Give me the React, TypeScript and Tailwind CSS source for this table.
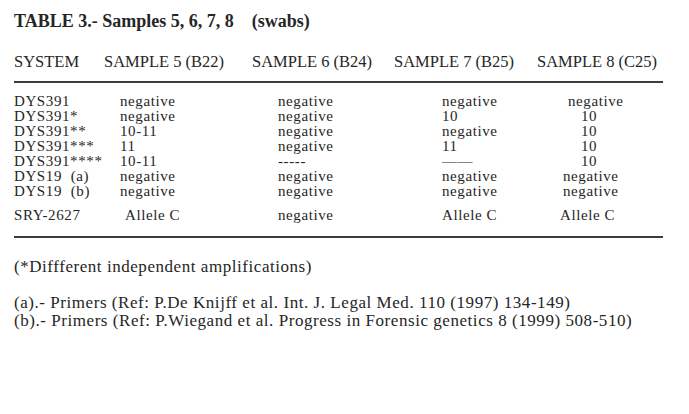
const rows = [
  { sys: "DYS391", s5: "negative", s6: "negative", s7: "negative", s8: "negative", p8: "pl-[8px]" },
  { sys: "DYS391*", s5: "negative", s6: "negative", s7: "10", s8: "10", p8: "pl-[21px]" },
  { sys: "DYS391**", s5: "10-11", s6: "negative", s7: "negative", s8: "10", p8: "pl-[21px]" },
  { sys: "DYS391***", s5: "11", s6: "negative", s7: "11", s8: "10", p8: "pl-[21px]" },
  { sys: "DYS391****", s5: "10-11", s6: "-----", s7: "——", s8: "10", p8: "pl-[21px]" },
  { sys: "DYS19  (a)", s5: "negative", s6: "negative", s7: "negative", s8: "negative", p8: "pl-[3px]" },
  { sys: "DYS19  (b)", s5: "negative", s6: "negative", s7: "negative", s8: "negative", p8: "pl-[3px]" },
];

export default function App() {
  return (
    <div
      className="min-h-screen w-[689px] bg-white px-[14px] pt-[11px] text-[#262626]"
      style={{ fontFamily: '"Liberation Serif", "Times New Roman", serif' }}
    >
      <h1 className="h-[20px] text-[18px] font-bold leading-[20px] whitespace-pre">
        TABLE 3.- Samples 5, 6, 7, 8{"    "}(swabs)
      </h1>

      <div className="mt-[21px] grid h-[20px] grid-cols-[90px_148px_142px_143px_auto] text-[16.5px] leading-[20px] whitespace-nowrap">
        <div>SYSTEM</div>
        <div>SAMPLE 5 (B22)</div>
        <div>SAMPLE 6 (B24)</div>
        <div>SAMPLE 7 (B25)</div>
        <div>SAMPLE 8 (C25)</div>
      </div>

      <div className="mt-[9px] h-[2px] w-[649px] bg-[#3d3d3d]" />

      <div className="mt-[11px] text-[15px] leading-[15px] tracking-[0.6px]">
        {rows.map((r) => (
          <div key={r.sys} className="grid h-[15px] grid-cols-[106px_158px_164px_118px_auto] whitespace-pre">
            <div>{r.sys}</div>
            <div>{r.s5}</div>
            <div>{r.s6}</div>
            <div>{r.s7}</div>
            <div className={r.p8}>{r.s8}</div>
          </div>
        ))}
        <div className="mt-[9px] grid h-[15px] grid-cols-[106px_158px_164px_118px_auto] whitespace-pre">
          <div>SRY-2627</div>
          <div className="pl-[5px]">Allele C</div>
          <div>negative</div>
          <div>Allele C</div>
          <div>Allele C</div>
        </div>
      </div>

      <div className="mt-[13px] h-[2px] w-[649px] bg-[#3d3d3d]" />

      <div className="text-[17px] leading-[18px] tracking-[0.55px]">
        <p className="mt-[20px]">(*Diffferent independent amplifications)</p>
        <p className="mt-[18px]">(a).- Primers (Ref: P.De Knijff et al. Int. J. Legal Med. 110 (1997) 134-149)</p>
        <p>(b).- Primers (Ref: P.Wiegand et al. Progress in Forensic genetics 8 (1999) 508-510)</p>
      </div>
    </div>
  );
}
